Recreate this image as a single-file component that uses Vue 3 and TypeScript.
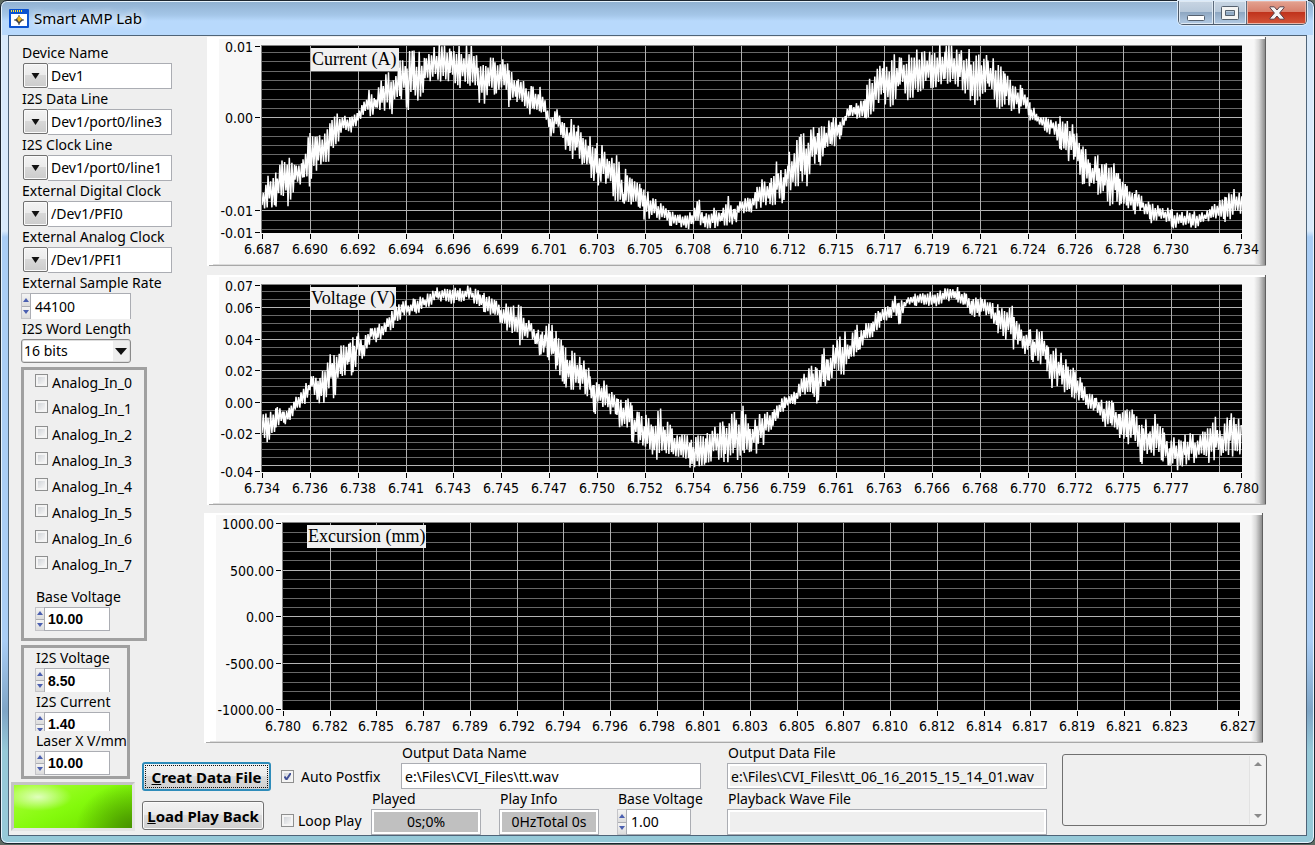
<script setup lang="ts">
import { ref } from 'vue'

interface Tick { at: number; text: string }
interface Rule { at: number; major: boolean }
interface Chart {
  id: string
  title: string
  titleX: number
  titleWidth: number
  width: number
  height: number
  left: number
  right: number
  top: number
  bottom: number
  xTicks: Tick[]
  yTicks: Tick[]
  columns: number[]
  rules: Rule[]
  wave: string
}

// Each triple is x, upper bound, lower bound of the signal, in plot pixels.
const currentBounds: number[] = [
  262,195,210, 268,177,207, 276,174,205, 282,162,192, 288,160,204, 295,157,187, 303,155,184, 310,134,184, 317,138,168, 326,134,168,
  332,120,150, 341,110,138, 346,116,130, 352,117,132, 358,113,122, 364,101,115, 369,87,116, 376,95,112, 382,80,111, 392,70,112,
  400,62,95, 407,54,108, 414,53,104, 425,55,88, 438,46,80, 450,46,83, 460,48,86, 470,47,84, 478,53,100, 488,52,102, 495,55,92,
  505,60,90, 509,68,107, 517,70,106, 526,80,114, 533,85,112, 540,88,110, 545,101,117, 551,117,140, 557,109,126, 563,125,141,
  570,120,161, 577,125,155, 583,135,167, 590,138,175, 597,145,183, 602,147,185, 608,162,184, 614,149,197, 619,157,203, 623,192,205,
  626,167,205, 632,180,203, 640,185,207, 644,187,218, 653,198,217, 662,205,221, 670,212,225, 680,214,227, 686,214,232, 692,212,224,
  698,198,230, 705,215,228, 715,208,227, 722,213,223, 727,193,227, 735,207,224, 740,202,214, 750,196,212, 757,188,210, 762,174,205,
  770,182,203, 777,158,205, 784,178,204, 788,155,190, 793,150,187, 801,134,185, 807,138,184, 815,125,162, 819,128,166, 825,128,155,
  832,117,150, 840,118,138, 846,113,122, 850,102,115, 857,102,120, 865,100,117, 867,84,117, 876,72,107, 884,63,103, 893,56,105,
  900,59,88, 909,55,100, 918,51,90, 932,47,86, 945,47,84, 960,48,85, 971,52,99, 980,52,107, 988,58,90, 997,62,109, 1005,75,103,
  1014,83,112, 1021,84,112, 1026,95,108, 1030,103,122, 1037,113,121, 1047,118,138, 1052,117,132, 1060,118,155, 1066,122,160,
  1074,127,158, 1080,145,178, 1083,145,183, 1090,160,185, 1098,157,193, 1105,162,195, 1110,168,204, 1117,163,200, 1120,180,207,
  1127,187,208, 1135,190,213, 1142,196,213, 1150,204,223, 1160,206,218, 1172,210,228, 1182,211,225, 1193,212,229, 1202,213,224,
  1212,204,222, 1225,198,221, 1234,190,216, 1242,192,212,
]

const voltageBounds: number[] = [
  262,404,447, 268,414,440, 276,404,430, 284,412,424, 290,404,422, 296,396,407, 301,393,407, 306,384,402, 312,376,390, 318,380,400,
  320,378,405, 325,362,400, 331,355,385, 334,357,398, 341,347,375, 349,339,372, 353,339,375, 357,327,360, 363,338,360, 368,333,347,
  371,325,340, 378,325,342, 388,314,333, 395,307,325, 403,302,317, 415,299,314, 425,296,309, 437,288,300, 450,288,303, 460,289,302,
  469,286,301, 480,292,306, 484,294,316, 495,301,314, 501,303,325, 507,305,331, 516,305,345, 521,308,343, 530,323,335, 537,327,350,
  541,336,361, 545,327,355, 549,326,374, 552,326,350, 556,332,375, 563,345,380, 566,350,388, 572,352,388, 580,357,388, 586,365,398,
  590,371,390, 594,378,416, 599,382,402, 604,382,410, 613,391,415, 617,398,418, 622,402,433, 628,397,427, 632,407,440, 639,413,444,
  646,415,458, 653,415,455, 658,408,458, 665,416,460, 672,430,461, 682,436,464, 690,437,468, 692,437,470, 698,437,469, 706,436,462,
  711,430,460, 724,421,460, 735,414,460, 743,408,453, 750,430,451, 757,418,452, 766,410,440, 773,412,425, 778,400,420, 785,397,408,
  795,392,404, 805,373,395, 813,366,395, 817,370,402, 824,350,385, 828,347,390, 836,343,372, 845,332,373, 850,338,365, 857,326,350,
  860,330,355, 866,322,338, 873,316,336, 880,310,327, 890,306,322, 895,297,318, 899,300,326, 907,297,305, 915,294,305, 925,292,307,
  935,291,306, 945,289,301, 955,290,300, 958,285,304, 965,294,307, 972,296,315, 978,300,319, 981,295,311, 990,303,317, 998,306,338,
  1007,307,338, 1014,308,349, 1020,322,340, 1025,332,355, 1029,325,345, 1033,338,366, 1038,328,365, 1043,330,360, 1047,345,370,
  1052,347,386, 1062,355,385, 1068,364,398, 1075,368,397, 1082,382,402, 1087,390,412, 1095,398,410, 1104,402,425, 1112,402,430,
  1120,415,438, 1127,411,442, 1134,411,445, 1142,413,463, 1150,430,458, 1155,414,455, 1163,430,460, 1170,440,468, 1175,436,467,
  1181,440,471, 1185,430,463, 1195,437,462, 1205,432,463, 1216,418,458, 1222,432,460, 1230,409,452, 1236,420,458, 1242,412,450,
]

/** Noisy trace that swings between the upper and lower bounds. */
function trace(bounds: number[], originX: number, originY: number, firstSeed: number): string {
  let seed = firstSeed
  const random = () => {
    seed = (seed * 48271) % 2147483647
    return seed / 2147483647
  }
  const points: string[] = []
  let side = 1
  for (let i = 0; i + 5 < bounds.length; i += 3) {
    const [x0, u0, l0, x1, u1, l1] = bounds.slice(i, i + 6)
    for (let x = x0; x < x1; x += 1.3) {
      const t = (x - x0) / (x1 - x0)
      const upper = u0 + (u1 - u0) * t
      const lower = l0 + (l1 - l0) * t
      const reach = Math.min(1.1, 0.35 + 0.95 * random())
      const y = (upper + lower) / 2 + (side * reach * (lower - upper)) / 2
      points.push(`${(x - originX).toFixed(1)},${(y - originY).toFixed(1)}`)
      side = -side
    }
  }
  return points.join(' ')
}

function spread(start: number, step: number, count: number): number[] {
  return Array.from({ length: count }, (_, i) => Math.round(start + step * i))
}

function horizontal(labels: string, start: number, step: number, end: number): Tick[] {
  const texts = labels.split(' ')
  return texts.map((text, i) => ({
    text,
    at: i === texts.length - 1 ? end : Math.round(start + step * i),
  }))
}

function rules(start: number, step: number, count: number, isMajor: (i: number) => boolean): Rule[] {
  return Array.from({ length: count }, (_, i) => ({ at: Math.round(start + step * i), major: isMajor(i) }))
}

const charts: Chart[] = [
  {
    id: 'current', title: 'Current (A)', titleX: 104, titleWidth: 88,
    width: 1059, height: 229, left: 55, right: 1035, top: 8, bottom: 196,
    xTicks: horizontal('6.687 6.690 6.692 6.694 6.696 6.699 6.701 6.703 6.705 6.708 6.710 6.712 6.715 6.717 6.719 6.721 6.724 6.726 6.728 6.730 6.734', 55, 47.85, 1034),
    yTicks: [{ at: 9, text: '0.01' }, { at: 80, text: '0.00' }, { at: 173, text: '-0.01' }, { at: 195, text: '-0.01' }],
    columns: spread(102.9, 47.85, 20),
    rules: rules(15.1, 9.3, 20, i => i === 7 || i === 17),
    wave: trace(currentBounds, 207, 37, 41),
  },
  {
    id: 'voltage', title: 'Voltage (V)', titleX: 103, titleWidth: 86,
    width: 1059, height: 230, left: 55, right: 1035, top: 9, bottom: 197,
    xTicks: horizontal('6.734 6.736 6.738 6.741 6.743 6.745 6.747 6.750 6.752 6.754 6.756 6.759 6.761 6.763 6.766 6.768 6.770 6.772 6.775 6.777 6.780', 55, 47.85, 1034),
    yTicks: [
      { at: 10, text: '0.07' }, { at: 32, text: '0.06' }, { at: 64, text: '0.04' }, { at: 95, text: '0.02' },
      { at: 127, text: '0.00' }, { at: 158, text: '-0.02' }, { at: 196, text: '-0.04' },
    ],
    columns: spread(102.9, 47.85, 20),
    rules: rules(16.4, 7.9, 23, i => i % 4 === 2),
    wave: trace(voltageBounds, 207, 275, 97),
  },
  {
    id: 'excursion', title: 'Excursion (mm)', titleX: 103, titleWidth: 119,
    width: 1059, height: 230, left: 79, right: 1036, top: 9, bottom: 197,
    xTicks: horizontal('6.780 6.782 6.785 6.787 6.789 6.792 6.794 6.796 6.798 6.801 6.803 6.805 6.807 6.810 6.812 6.814 6.817 6.819 6.821 6.823 6.827', 79, 46.7, 1034),
    yTicks: [
      { at: 10, text: '1000.00' }, { at: 57, text: '500.00' }, { at: 103, text: '0.00' },
      { at: 150, text: '-500.00' }, { at: 196, text: '-1000.00' },
    ],
    columns: spread(125.7, 46.7, 20),
    rules: rules(19.3, 9.33, 19, i => i % 5 === 4),
    wave: '',
  },
]

const lines = ref([
  { id: 'device', label: 'Device Name', value: 'Dev1' },
  { id: 'data', label: 'I2S Data Line', value: 'Dev1/port0/line3' },
  { id: 'clock', label: 'I2S Clock Line', value: 'Dev1/port0/line1' },
  { id: 'digital', label: 'External Digital Clock', value: '/Dev1/PFI0' },
  { id: 'analog', label: 'External Analog Clock', value: '/Dev1/PFI1' },
])
const sampleRate = ref('44100')
const wordLength = ref('16 bits')
const inputs = ref(Array.from({ length: 8 }, (_, i) => ({ label: `Analog_In_${i}`, on: false })))
const analogBase = ref('10.00')
const scales = ref([
  { id: 'i2sv', label: 'I2S Voltage', value: '8.50' },
  { id: 'i2sc', label: 'I2S Current', value: '1.40' },
  { id: 'laser', label: 'Laser X V/mm', value: '10.00' },
])
const autoPostfix = ref(true)
const loopPlay = ref(false)
const outputName = ref('e:\\Files\\CVI_Files\\tt.wav')
const outputFile = ref('e:\\Files\\CVI_Files\\tt_06_16_2015_15_14_01.wav')
const playbackFile = ref('')
const playBase = ref('1.00')
</script>

<template>
  <div class="window">
    <header class="titlebar">
      <svg class="app-icon" viewBox="0 0 20 19" aria-hidden="true">
        <rect x="0" y="0" width="20" height="19" rx="1" fill="#0b52cf" />
        <rect x="2" y="5" width="16" height="12" fill="#fff" />
        <path d="M2 2h1M4 2h1M6 2h1M8 2h1M10 2h1M12 2h1" stroke="#ffe13a" stroke-width="2" />
        <path d="M10 6v10M5 11h10" stroke="#444" stroke-width="1" />
        <path d="M10 7l4 4-4 4-4-4z" fill="#444" />
        <path d="M10 7l3 3-3 3-2-3z" fill="#f2b51c" />
      </svg>
      <h1>Smart AMP Lab</h1>
      <div class="caption-buttons">
        <button class="cap min" aria-label="Minimize">
          <svg viewBox="0 0 18 6" width="18" height="6"><rect x=".5" y=".5" width="17" height="5" rx="1" fill="#fff" stroke="#55606e" /></svg>
        </button>
        <button class="cap max" aria-label="Maximize">
          <svg viewBox="0 0 18 14" width="18" height="14">
            <path d="M1.500.5h15a1 1 0 0 1 1 1v11a1 1 0 0 1-1 1h-15a1 1 0 0 1-1-1v-11a1 1 0 0 1 1-1zM4.500 4.500v5h9v-5z" fill="#f4f4f4" fill-rule="evenodd" stroke="#55606e" />
          </svg>
        </button>
        <button class="cap close" aria-label="Close">
          <svg viewBox="0 0 16 14" width="16" height="14">
            <path d="M1 .8h4.300L8 4 10.700.8H15v1L10.600 7 15 12.200v1h-4.300L8 10l-2.700 3.200H1v-1L5.400 7 1 1.800z" fill="#f6f6f6" stroke="#5a4048" />
          </svg>
        </button>
      </div>
    </header>

    <main class="client">
      <aside class="sidebar">
        <div v-for="line in lines" :key="line.id" class="field">
          <label :for="line.id">{{ line.label }}</label>
          <div class="combo">
            <button :aria-label="`Choose ${line.label}`">
              <svg viewBox="0 0 8 6" width="9" height="6"><path d="M0 0h8L4 6z" fill="#111" /></svg>
            </button>
            <input :id="line.id" v-model="line.value" type="text">
          </div>
        </div>
        <div class="field">
          <label for="rate">External Sample Rate</label>
          <div class="spin rate">
            <span class="steps"><button aria-label="Increase"><i class="up" /></button><button aria-label="Decrease"><i class="down" /></button></span>
            <input id="rate" v-model="sampleRate" type="text">
          </div>
        </div>
        <div class="field word">
          <label for="word">I2S Word Length</label>
          <div class="select-box">
            <select id="word" v-model="wordLength"><option>16 bits</option><option>24 bits</option><option>32 bits</option></select>
            <svg viewBox="0 0 12 7" width="12" height="7" aria-hidden="true"><path d="M0 0h12L6 7z" fill="#111" /></svg>
          </div>
        </div>

        <section class="group analog">
          <label v-for="item in inputs" :key="item.label" class="check">
            <input v-model="item.on" type="checkbox"><span>{{ item.label }}</span>
          </label>
          <label class="base-label" for="analog-base">Base Voltage</label>
          <div class="spin strong">
            <span class="steps"><button aria-label="Increase"><i class="up" /></button><button aria-label="Decrease"><i class="down" /></button></span>
            <input id="analog-base" v-model="analogBase" type="text">
          </div>
        </section>

        <section class="group scale">
          <template v-for="item in scales" :key="item.id">
            <label :for="item.id">{{ item.label }}</label>
            <div class="spin strong" :class="item.id">
              <span class="steps"><button aria-label="Increase"><i class="up" /></button><button aria-label="Decrease"><i class="down" /></button></span>
              <input :id="item.id" v-model="item.value" type="text">
            </div>
          </template>
        </section>

        <div class="led" role="img" aria-label="Running" />
      </aside>

      <section class="charts">
        <svg v-for="c in charts" :key="c.id" class="chart" :class="c.id" :viewBox="`0 0 ${c.width} ${c.height}`" role="img" :aria-label="c.title">
          <defs>
            <linearGradient :id="`${c.id}-edge`">
              <stop offset="0" stop-color="#f7f7f7" /><stop offset=".45" stop-color="#d8d8d8" /><stop offset="1" stop-color="#8c8c8c" />
            </linearGradient>
            <clipPath :id="`${c.id}-plot`"><rect :x="c.left" :y="c.top" :width="c.right - c.left" :height="c.bottom - c.top" /></clipPath>
          </defs>
          <g shape-rendering="crispEdges">
            <rect :width="c.width" :height="c.height" fill="#f7f7f7" />
            <rect width="12" :height="c.height" fill="#fff" />
            <rect :width="c.width - 2" height="2" fill="#fff" />
            <rect x="1047" y="2" width="11" :height="c.height - 2" :fill="`url(#${c.id}-edge)`" />
            <rect x="1058" width="1" :height="c.height" fill="#606060" />
            <rect x="6" :y="c.height - 2" width="1047" height="1" fill="#dcdcdc" />
            <rect x="2" :y="c.height - 1" width="1057" height="1" fill="#a8a8a8" />
            <rect :x="c.left" :y="c.top" :width="c.right - c.left" :height="c.bottom - c.top" fill="#000" />
            <rect v-for="r in c.rules" :key="r.at" :x="c.left" :y="r.at" :width="c.right - c.left" height="1" :fill="r.major ? '#b4b4b4' : '#686868'" />
            <rect v-for="x in c.columns" :key="x" :x="x" :y="c.top" width="1" :height="c.bottom - c.top" fill="#b0b0b0" />
            <rect :x="c.left - 1" :y="c.top" :width="c.right - c.left + 1" height="1" fill="#848484" />
            <rect :x="c.left - 1" :y="c.top" width="1" :height="c.bottom - c.top" fill="#848484" />
            <rect v-for="t in c.xTicks" :key="t.text" :x="t.at" :y="c.bottom + 1" width="1" height="5" fill="#000" />
            <rect v-for="t in c.yTicks" :key="t.at" :x="c.left - 7" :y="t.at" width="5" height="1" fill="#000" />
          </g>
          <polyline v-if="c.wave" :points="c.wave" :clip-path="`url(#${c.id}-plot)`" class="wave" />
          <text v-for="t in c.xTicks" :key="t.text" :x="t.at" :y="c.bottom + 21" text-anchor="middle">{{ t.text }}</text>
          <text v-for="t in c.yTicks" :key="t.at" :x="c.left - 9" :y="t.at + 6" text-anchor="end">{{ t.text }}</text>
          <rect :x="c.titleX" :y="c.top + 3" :width="c.titleWidth" height="23" fill="#f0f0f0" />
          <text class="chart-title" :x="c.titleX + 1" :y="c.top + 20">{{ c.title }}</text>
        </svg>
      </section>

      <section class="bottom">
        <div class="actions">
          <button class="action focus"><u>C</u>reat Data File</button>
          <button class="action"><u>L</u>oad Play Back</button>
        </div>
        <div class="options">
          <label><input v-model="autoPostfix" type="checkbox"><span class="wide">Auto Postfix</span></label>
          <label><input v-model="loopPlay" type="checkbox"><span>Loop Play</span></label>
        </div>
        <div class="playing">
          <div class="field name">
            <label for="out-name">Output Data Name</label>
            <input id="out-name" v-model="outputName" class="box" type="text">
          </div>
          <div class="play-row">
            <div class="field played"><span class="caption">Played</span><output class="box meter">0s;0%</output></div>
            <div class="field info"><span class="caption">Play Info</span><output class="box meter">0HzTotal 0s</output></div>
            <div class="field base">
              <label for="play-base">Base Voltage</label>
              <div class="spin play">
                <span class="steps"><button aria-label="Increase"><i class="up" /></button><button aria-label="Decrease"><i class="down" /></button></span>
                <input id="play-base" v-model="playBase" type="text">
              </div>
            </div>
          </div>
        </div>
        <div class="files">
          <div class="field"><label for="out-file">Output Data File</label><input id="out-file" v-model="outputFile" class="box gray" type="text" readonly></div>
          <div class="field"><label for="wave-file">Playback Wave File</label><input id="wave-file" v-model="playbackFile" class="box gray" type="text" readonly></div>
        </div>
        <div class="log">
          <textarea aria-label="Messages" readonly />
          <div class="scroll" aria-hidden="true"><i class="up" /><i class="down" /></div>
        </div>
      </section>
    </main>
  </div>
</template>

<style>
body { margin: 0; background: #5d6a62; }
</style>

<style scoped>
* { box-sizing: border-box; }
.window {
  min-width: 1280px;
  padding: 0 8px 8px;
  border: 1px solid #1d2630;
  border-radius: 7px;
  background:
    linear-gradient(#8fb0d0 0, #a4c6e8 14px, #b8d9fc 20px, #b8d9fc 34px, transparent 34px),
    linear-gradient(#d9eafb 0, #d9eafb 230px, #a9cdf5 236px, #a9cdf5 640px, #7fa5c6 710px, #96c9d8 750px, #96c9d8 100%);
  box-shadow: inset 0 0 0 1px #e6f3fd;
  font: 14px/20px "Noto Sans", "DejaVu Sans", sans-serif;
  color: #000;
}
.titlebar { display: flex; align-items: flex-start; height: 34px; margin-right: -1px; }
.app-icon { width: 20px; height: 19px; margin-top: 8px; flex: none; }
h1 { margin: 6px 0 0 5px; font: 15px/22px "Noto Sans", sans-serif; text-shadow: 0 0 8px #fff, 0 0 8px #fff; }
.caption-buttons { display: flex; margin-left: auto; height: 24px; border: 1px solid #4d5a69; border-top: 0; border-radius: 0 0 5px 5px; overflow: hidden; box-shadow: 0 0 0 1px #dcebfa; }
.cap { display: flex; align-items: center; justify-content: center; padding: 0; border: 0; border-right: 1px solid #5c6b7d; background: linear-gradient(#c8d5e3 0, #b7c8da 46%, #8ea7c2 50%, #b3cbe4 100%); box-shadow: inset 0 0 0 1px #dfe9f3; }
.min { width: 35px; padding-top: 10px; }
.max { width: 33px; }
.close { width: 59px; border-right: 0; background: linear-gradient(#e3a392 0, #d8806d 46%, #c0331c 50%, #d4553a 100%); box-shadow: inset 0 0 0 1px #eab5a8; }

.client {
  display: grid;
  grid-template-columns: 133px 1fr;
  grid-template-rows: auto 1fr;
  margin: 0 -1px -1px;
  border: 1px solid #4f6478;
  background: #efefef;
}
.sidebar { grid-row: 1 / 3; padding: 7px 0 4px 12px; white-space: nowrap; }
button, input, select, textarea { font: inherit; color: inherit; margin: 0; border-radius: 0; }
.field > label, .field > .caption, .group > label { display: block; height: 20px; line-height: 20px; padding-left: 1px; white-space: nowrap; }

.combo { display: flex; width: 149px; height: 26px; margin-left: 2px; }
.combo button { display: flex; align-items: center; justify-content: center; width: 25px; height: 25px; padding: 0; border: 1px solid #707070; border-radius: 2px; background: linear-gradient(#f3f3f3 0, #ebebeb 48%, #d8d8d8 50%, #cccccc 100%); box-shadow: inset 0 0 0 1px #fafafa; }
.combo input { flex: 1; min-width: 0; border: 1px solid #abadb3; border-left: 0; padding: 0 0 0 3px; background: #fff; }

.spin { display: flex; height: 24px; }
.spin input { flex: 1; min-width: 0; border: 1px solid #abadb3; padding: 0 0 0 4px; background: #fff; }
.steps { display: flex; flex-direction: column; gap: 1px; width: 9px; background: #abadb3; border: 1px solid #c4c4c8; border-right: 0; }
.steps button { flex: 1; display: flex; align-items: center; justify-content: center; padding: 0; border: 0; min-height: 0; background: linear-gradient(#f4f4f4, #dcdcdc); }
.up, .down { width: 0; height: 0; border: 3px solid transparent; }
.up { border-top: 0; border-bottom: 4px solid #4a5fb0; }
.down { border-bottom: 0; border-top: 4px solid #4a5fb0; }
.rate { width: 110px; height: 26px; }
.rate input { border-bottom: 0; }
.strong { width: 75px; font: bold 14px/20px "Liberation Sans", sans-serif; }
.strong input { padding-left: 3px; }

.select-box { position: relative; width: 110px; height: 24px; }
.select-box select { appearance: none; display: block; width: 100%; height: 24px; padding: 0 20px 0 2px; border: 1px solid #8a8a8a; border-radius: 3px; background: linear-gradient(90deg, #fff 91px, #eee 91px); box-shadow: inset 0 0 0 1px #ddd; }
.select-box svg { position: absolute; right: 4px; top: 9px; pointer-events: none; }

.group { border: 3px solid #a0a0a0; padding-left: 11px; }
.analog { width: 126px; margin-top: 4px; padding-bottom: 7px; }
.group > .check { display: flex; align-items: flex-start; height: 26px; padding: 4px 0 0; gap: 4px; }
.check span { line-height: 18px; }
input[type="checkbox"] { appearance: none; flex: none; display: block; width: 13px; height: 13px; border: 1px solid #8e8f8f; background: linear-gradient(135deg, #cdd1d6 10%, #f4f4f4 80%); box-shadow: inset 0 0 0 2px #f4f4f4; }
input[type="checkbox"]:checked { background: url("data:image/svg+xml,%3Csvg xmlns='http://www.w3.org/2000/svg' viewBox='0 0 11 11'%3E%3Cpath d='M2.500 5.500l2 3L9 1.800' fill='none' stroke='%23404f96' stroke-width='2'/%3E%3C/svg%3E") center / 11px 11px no-repeat, linear-gradient(135deg, #cdd1d6, #f4f4f4); }
.group > .base-label { margin-top: 9px; }
.scale { width: 109px; margin-top: 4px; padding-bottom: 1px; }
.group > label { width: max-content; position: relative; background: #efefef; }
.scale .i2sc { height: 19px; overflow: hidden; }
.scale .i2sc input { height: 24px; }
.scale .i2sc .steps { height: 24px; }
.scale .i2sv input { border-bottom: 0; }
.led {
  height: 49px;
  margin: 3px 7px 0 -10px;
  border: 3px solid;
  border-color: #c4c4c4 #e4e4e4 #e4e4e4 #c4c4c4;
  background:
    radial-gradient(ellipse 34px 14px at 24px 12px, rgba(255, 255, 255, .7), rgba(255, 255, 255, 0)),
    radial-gradient(ellipse 56px 46px at 100% 100%, #489400, rgba(90, 180, 0, 0)),
    linear-gradient(155deg, #a4ff30 10%, #84fa0c 50%, #74e800 80%, #62cc00);
}

.charts { display: flex; flex-direction: column; padding: 1px 40px 0 65px; }
.chart { display: block; width: 100%; height: auto; margin-bottom: 9px; }
.chart.voltage { margin-bottom: 8px; }
.chart.excursion { margin: 0; position: relative; left: -3px; }
.chart text { font: 14px "DejaVu Sans Condensed", "DejaVu Sans", sans-serif; }
.chart .chart-title { font: 18px "Liberation Serif", serif; }
.wave { fill: none; stroke: #fff; stroke-width: 1.5; stroke-linejoin: bevel; }

.bottom { display: flex; align-items: flex-start; padding-right: 39px; }
.actions { width: 129px; padding-top: 19px; flex: none; }
.action { display: block; height: 29px; padding: 0; width: 122px; margin-bottom: 10px; border: 1px solid #707070; border-radius: 3px; background: linear-gradient(#f3f3f3 0, #ebebeb 46%, #dcdcdc 50%, #cfcfcf 100%); box-shadow: inset 0 0 0 1px #fbfbfb; font-weight: bold; font-size: 15px; white-space: nowrap; }
.action:last-child { margin-bottom: 0; }
.action.focus { width: 129px; border: 2px solid #2f8cba; box-shadow: none; outline: 1px dotted #111; outline-offset: -4px; }
.options { display: flex; flex-direction: column; gap: 23px; width: 90px; margin-left: 10px; padding-top: 23px; flex: none; }
.options label { display: flex; align-items: flex-start; gap: 4px; white-space: nowrap; }
.options input { margin-top: 4px; }
.options span { margin-top: 1px; }
.options .wide { margin-left: 3px; }
.playing { flex: 330 1 0; min-width: 0; }
.name { margin-left: 30px; }
.box { display: block; width: 100%; height: 26px; border: 1px solid #abadb3; padding: 0 0 0 3px; background: #fff; }
.play-row { display: flex; }
.played { flex: 1; margin-right: 18px; }
.info { width: 100px; margin-right: 18px; }
.base { width: 84px; }
.play { width: 74px; height: 26px; }
.meter { padding: 0; border: 1px solid #abadb3; background: #c0c0c0; box-shadow: inset 0 0 0 2px #fff; text-align: center; line-height: 24px; white-space: nowrap; }
.files { flex: 320 1 0; min-width: 0; margin-left: 26px; }
.gray { background: #efefef; box-shadow: inset 0 0 0 2px #fff; }
.log { display: flex; width: 205px; flex: none; height: 72px; margin: 11px 0 0 15px; padding: 1px; border: 1px solid #707070; border-radius: 3px; }
.log textarea { flex: 1; min-width: 0; resize: none; border: 0; background: #efefef; outline: 0; padding: 2px; }
.scroll { display: flex; flex-direction: column; justify-content: space-between; align-items: center; width: 16px; padding: 6px 0; border-left: 1px solid #e2e2e2; background: #f2f2f2; }
.scroll .up { border-width: 0 4px 4px; border-bottom-color: #8a8a8a; }
.scroll .down { border-width: 4px 4px 0; border-top-color: #8a8a8a; }
</style>
